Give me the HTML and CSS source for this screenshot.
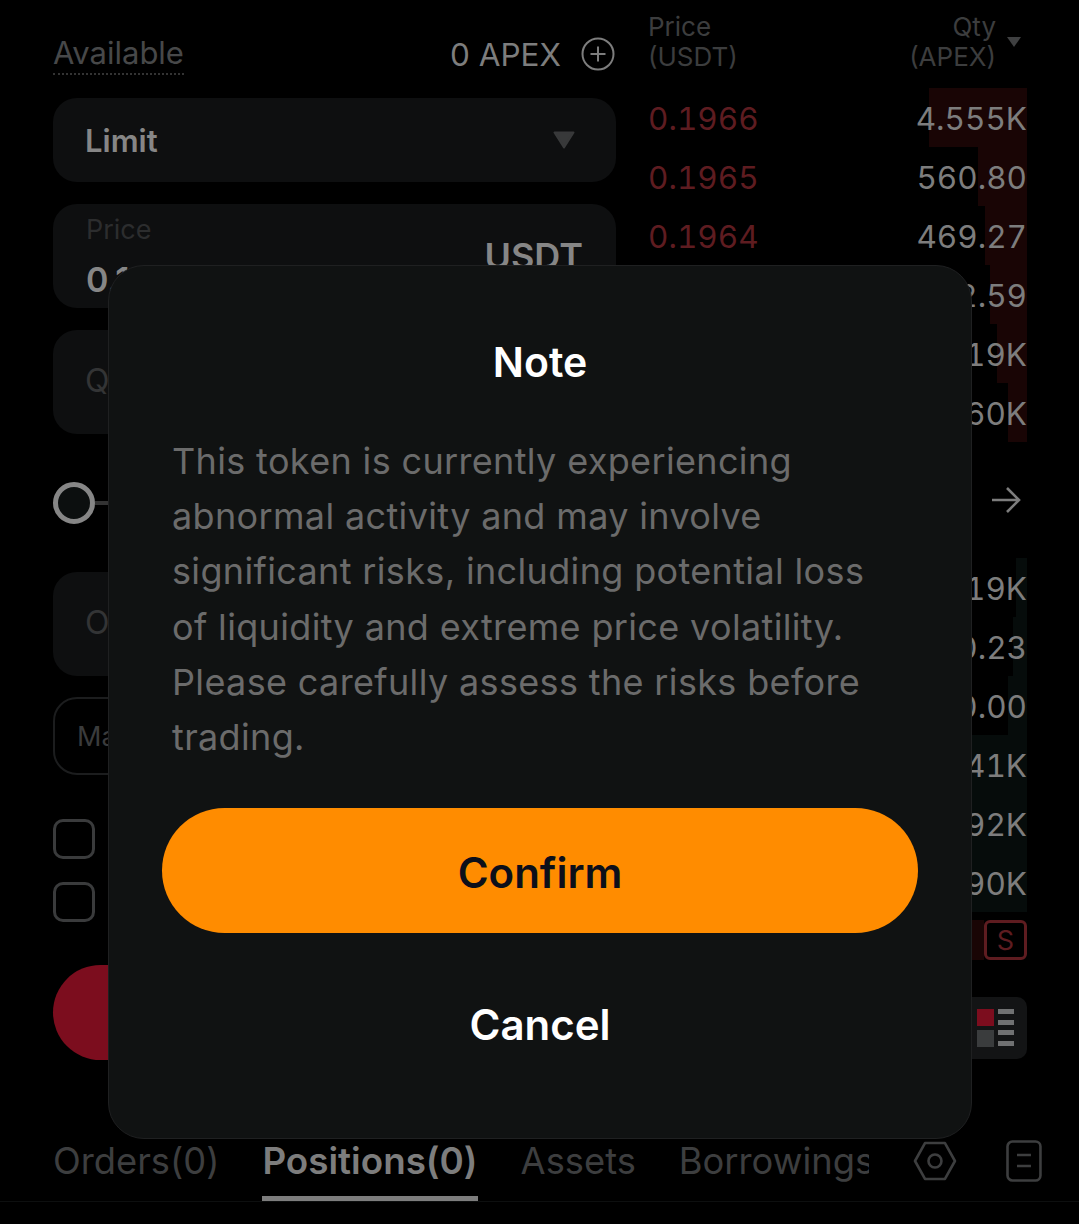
FILE: index.html
```html
<!DOCTYPE html>
<html>
<head>
  <title>Trade APEX</title>
  <link rel="stylesheet" href="styles.css">
</head>
<body>
  <div class="page">
    <div class="trade">
      <!-- Order form -->
      <div class="form">
        <div class="avail-row">
          <span class="avail-label">Available</span>
          <span class="avail-value">0 APEX</span>
          <svg class="plus-icon" viewBox="0 0 34 34" width="34" height="34">
            <circle cx="17" cy="17" r="15.5" fill="none" stroke="#7d7d7d" stroke-width="2"/>
            <path d="M17 9.5v15M9.5 17h15" fill="none" stroke="#7d7d7d" stroke-width="2"/>
          </svg>
        </div>
        <div class="box select-box">
          <span class="select-text">Limit</span>
          <svg class="select-caret" viewBox="0 0 22 18" width="22" height="18">
            <path d="M1.5 1.5h19L11 16.5z" fill="#38393a" stroke="#38393a" stroke-width="2" stroke-linejoin="round"/>
          </svg>
        </div>
        <div class="box input-box price-box">
          <div class="input-main">
            <span class="input-label">Price</span>
            <span class="input-value">0.1966</span>
          </div>
          <span class="input-unit">USDT</span>
        </div>
        <div class="box input-box qty-box"><span class="placeholder">Qty</span></div>
        <div class="slider">
          <span class="slider-knob"></span>
          <span class="slider-track"></span>
        </div>
        <div class="box input-box qty-box"><span class="placeholder">Order</span></div>
        <div class="margin-box"><span>Max</span></div>
        <div class="checks">
          <span class="check"></span>
          <span class="check"></span>
        </div>
        <div class="sell-btn"></div>
      </div>

      <!-- Order book -->
      <div class="book">
        <div class="book-head">
          <div class="book-col">Price<br>(USDT)</div>
          <div class="book-col book-col-qty">Qty<br>(APEX)</div>
          <svg class="book-caret" viewBox="0 0 14 10" width="14" height="10">
            <path d="M0 0h14L7 10z" fill="#3f4041"/>
          </svg>
        </div>
        <div class="rows">
          <div class="row"><span class="depth depth-ask" style="width:98px"></span><span class="row-price">0.1966</span><span class="row-qty">4.555K</span></div>
          <div class="row"><span class="depth depth-ask" style="width:49px"></span><span class="row-price">0.1965</span><span class="row-qty">560.80</span></div>
          <div class="row"><span class="depth depth-ask" style="width:42px"></span><span class="row-price">0.1964</span><span class="row-qty">469.27</span></div>
          <div class="row"><span class="depth depth-ask" style="width:37px"></span><span class="row-price">0.1963</span><span class="row-qty">322.59</span></div>
          <div class="row"><span class="depth depth-ask" style="width:30px"></span><span class="row-price">0.1962</span><span class="row-qty">1.119K</span></div>
          <div class="row"><span class="depth depth-ask" style="width:19px"></span><span class="row-price">0.1961</span><span class="row-qty">1.060K</span></div>
        </div>
        <div class="mid">
          <svg viewBox="0 0 30 28" width="30" height="28">
            <path d="M1 14h27M16 2l12 12-12 12" fill="none" stroke="#7d7d7d" stroke-width="2.6"/>
          </svg>
        </div>
        <div class="rows">
          <div class="row"><span class="depth depth-bid" style="width:11px"></span><span class="row-price"></span><span class="row-qty">1.119K</span></div>
          <div class="row"><span class="depth depth-bid" style="width:14px"></span><span class="row-price"></span><span class="row-qty">330.23</span></div>
          <div class="row"><span class="depth depth-bid" style="width:19px"></span><span class="row-price"></span><span class="row-qty">300.00</span></div>
          <div class="row"><span class="depth depth-bid" style="width:120px"></span><span class="row-price"></span><span class="row-qty">1.241K</span></div>
          <div class="row"><span class="depth depth-bid" style="width:120px"></span><span class="row-price"></span><span class="row-qty">1.192K</span></div>
          <div class="row"><span class="depth depth-bid" style="width:120px"></span><span class="row-price"></span><span class="row-qty">1.290K</span></div>
        </div>
        <div class="ratio">
          <span class="ratio-bar"></span>
          <span class="ratio-s">S</span>
        </div>
        <div class="layout-row">
          <div class="layout-btn">
            <svg viewBox="0 0 38 38" width="38" height="38">
              <rect x="0" y="0" width="17" height="17" fill="#7c0d1e"/>
              <rect x="0" y="21" width="17" height="17" fill="#3a3c3d"/>
              <path d="M21 2.5h16M21 13.5h16M21 23.5h16M21 34.5h16" stroke="#707172" stroke-width="5"/>
            </svg>
          </div>
        </div>
      </div>
    </div>

    <!-- Bottom tabs -->
    <div class="tabs">
      <div class="tab-list">
        <span class="tab">Orders(0)</span>
        <span class="tab tab-active">Positions(0)</span>
        <span class="tab">Assets</span>
        <span class="tab">Borrowings</span>
      </div>
      <svg class="hex-icon" viewBox="0 0 44 40" width="44" height="40">
        <path d="M12 2h20l10 18-10 18H12L2 20z" fill="none" stroke="#3d3e3f" stroke-width="2.6" stroke-linejoin="round"/>
        <circle cx="22" cy="20" r="6.5" fill="none" stroke="#3d3e3f" stroke-width="2.6"/>
      </svg>
      <svg class="doc-icon" viewBox="0 0 36 42" width="36" height="42">
        <rect x="1.5" y="1.5" width="33" height="39" rx="5" fill="none" stroke="#3d3e3f" stroke-width="2.6"/>
        <path d="M11 15h14M11 26h14" stroke="#3d3e3f" stroke-width="2.6"/>
      </svg>
    </div>

    <!-- Warning dialog -->
    <div class="modal">
      <h2 class="modal-title">Note</h2>
      <p class="modal-text">This token is currently experiencing abnormal activity and may involve significant risks, including potential loss of liquidity and extreme price volatility. Please carefully assess the risks before trading.</p>
      <button class="btn-confirm">Confirm</button>
      <button class="btn-cancel">Cancel</button>
    </div>
  </div>
</body>
</html>
```

FILE: styles.css
```css
* {
  box-sizing: border-box;
}

body {
  margin: 0;
  background-color: #000;
  font-family: "Inter", "Liberation Sans", sans-serif;
}

.page {
  position: relative;
  display: flex;
  flex-direction: column;
  width: 1079px;
  height: 1224px;
  overflow: hidden;
  background-color: #000;
}

.trade {
  display: flex;
  gap: 32px;
  flex: 1;
  padding-left: 53px;
}

/* Order form */
.form {
  width: 563px;
  padding-top: 33px;
}

.avail-row {
  display: flex;
  align-items: center;
  height: 42px;
}

.avail-label {
  border-bottom: 2px dotted #333;
  height: 42px;
  font-size: 31px;
  line-height: 40px;
  color: #474849;
}

.avail-value {
  margin-left: auto;
  font-size: 31.5px;
  color: #7d7d7d;
}

.plus-icon {
  margin-left: 20px;
  margin-right: 1px;
}

.box {
  background-color: #0e0f10;
  border-radius: 24px;
}

.select-box {
  display: flex;
  align-items: center;
  justify-content: space-between;
  height: 84px;
  margin-top: 23px;
  padding: 0 41px 0 32px;
}

.select-text {
  font-size: 31px;
  font-weight: 600;
  color: #868686;
}

.input-box {
  display: flex;
  align-items: center;
  height: 104px;
  margin-top: 22px;
  padding: 0 33px;
}

.input-main {
  display: flex;
  flex-direction: column;
  margin-right: auto;
  margin-top: -2px;
}

.input-label {
  font-size: 27px;
  line-height: 36px;
  color: #2c2d2e;
}

.input-value {
  margin-top: 14px;
  font-size: 34px;
  line-height: 36px;
  font-weight: 600;
  color: #868686;
}

.input-unit {
  font-size: 36px;
  font-weight: 600;
  color: #868686;
}

.placeholder {
  margin-bottom: 4px;
  margin-left: -1px;
  font-size: 32px;
  color: #333435;
}

.slider {
  display: flex;
  align-items: center;
  margin-top: 48px;
}

.slider-knob {
  width: 42px;
  height: 42px;
  border: 5px solid #868686;
  border-radius: 50%;
  background-color: #0c0f0f;
}

.slider-track {
  flex: 1;
  height: 4px;
  background-color: #333;
}

.slider + .qty-box {
  margin-top: 48px;
}

.margin-box {
  display: flex;
  align-items: center;
  height: 78px;
  margin-top: 21px;
  padding: 0 22px;
  border: 2px solid #1c1d1e;
  border-radius: 24px;
  font-size: 27px;
  color: #3a3b3c;
}

.checks {
  display: flex;
  flex-direction: column;
  gap: 23px;
  margin-top: 44px;
}

.check {
  width: 42px;
  height: 40px;
  border: 3px solid #3a3b3c;
  border-radius: 10px;
}

.sell-btn {
  height: 95px;
  margin-top: 43px;
  border-radius: 48px;
  background-color: #7c0d1e;
}

/* Order book */
.book {
  width: 379px;
  padding-top: 12px;
}

.book-head {
  display: flex;
  align-items: center;
  height: 60px;
  margin-bottom: 16px;
  font-size: 26px;
  line-height: 30px;
  color: #3c3d3e;
}

.book-col-qty {
  margin-left: auto;
  text-align: right;
}

.book-caret {
  margin: 0 6px 0 11px;
}

.row {
  position: relative;
  display: flex;
  align-items: center;
  justify-content: space-between;
  height: 59px;
  padding-top: 2px;
  font-size: 31.5px;
  font-variant-numeric: tabular-nums;
}

.depth {
  position: absolute;
  top: 0;
  right: 0;
  bottom: 0;
}

.depth-ask {
  background-color: #190505;
}

.depth-bid {
  background-color: #060c0b;
}

.row-price {
  position: relative;
  color: #5e1c20;
}

.row-qty {
  position: relative;
  color: #7d7d7d;
}

.mid {
  display: flex;
  align-items: center;
  justify-content: flex-end;
  height: 116px;
  padding-right: 6px;
}

.ratio {
  display: flex;
  justify-content: flex-end;
  height: 40px;
  margin-top: 8px;
}

.ratio-bar {
  width: 80px;
  background-color: #190505;
}

.ratio-s {
  display: flex;
  align-items: center;
  justify-content: center;
  width: 43px;
  border: 3px solid #5e1c20;
  border-radius: 6px;
  font-size: 27px;
  color: #5e1c20;
}

.layout-row {
  display: flex;
  justify-content: flex-end;
  margin-top: 37px;
}

.layout-btn {
  display: flex;
  align-items: center;
  justify-content: flex-end;
  width: 120px;
  height: 62px;
  padding-right: 12px;
  border-radius: 10px;
  background-color: #131415;
}

/* Bottom tabs */
.tabs {
  display: flex;
  align-items: center;
  height: 82px;
  margin-bottom: 22px;
  padding: 0 37px 0 53px;
  border-bottom: 1px solid #0d0f0f;
}

.tab-list {
  display: flex;
  gap: 43px;
  width: 817px;
  height: 81px;
  overflow: hidden;
}

.tab {
  flex-shrink: 0;
  height: 81px;
  padding-top: 16px;
  font-size: 36.3px;
  line-height: 50px;
  color: #3d3e3f;
}

.tab-active {
  border-bottom: 5px solid #7d7d7d;
  font-size: 36.8px;
  font-weight: 600;
  color: #7d7d7d;
}

.hex-icon {
  margin-left: 44px;
}

.doc-icon {
  margin-left: 49px;
}

/* Warning dialog */
.modal {
  position: absolute;
  top: 265px;
  left: 108px;
  display: flex;
  flex-direction: column;
  align-items: center;
  width: 864px;
  height: 874px;
  padding: 71px 54px 0;
  background-color: #101212;
  border: 1px solid #1f2021;
  border-radius: 36px;
}

.modal-title {
  margin: 0;
  font-size: 41px;
  line-height: 50px;
  font-weight: 600;
  color: #fff;
}

.modal-text {
  width: 100%;
  margin: 47px 0 0;
  padding: 0 44px 0 9px;
  font-size: 36px;
  letter-spacing: 0.35px;
  line-height: 55.2px;
  color: #6b6b6b;
}

.btn-confirm {
  width: 756px;
  height: 125px;
  margin-top: 43px;
  padding-top: 4px;
  border: none;
  border-radius: 63px;
  background-color: #ff8c00;
  font-family: inherit;
  font-size: 42px;
  font-weight: 600;
  color: #0c0f1a;
}

.btn-cancel {
  margin-top: 65px;
  border: none;
  background: none;
  font-family: inherit;
  font-size: 42px;
  font-weight: 600;
  color: #fff;
}
```
